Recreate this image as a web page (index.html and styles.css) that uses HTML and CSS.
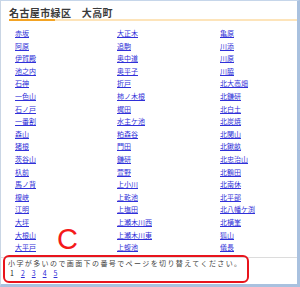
FILE: index.html
```html
<!DOCTYPE html>
<html lang="ja">
<head>
<meta charset="UTF-8" />
<meta name="viewport" content="width=device-width, initial-scale=1.0" />
<title>名古屋市緑区 大高町</title>
<link rel="stylesheet" href="styles.css">
</head>
<body>
  <div id="frame">
    <h1 class="title">名古屋市緑区　大高町</h1>
    <div class="rule"><span></span></div>

    <div class="aza-list">
      <ul class="col">
        <li><a href="#">赤坂</a></li>
        <li><a href="#">阿原</a></li>
        <li><a href="#">伊賀殿</a></li>
        <li><a href="#">池之内</a></li>
        <li><a href="#">石神</a></li>
        <li><a href="#">一色山</a></li>
        <li><a href="#">石ノ戸</a></li>
        <li><a href="#">一番割</a></li>
        <li><a href="#">森山</a></li>
        <li><a href="#">猪根</a></li>
        <li><a href="#">茨谷山</a></li>
        <li><a href="#">杁前</a></li>
        <li><a href="#">馬ノ背</a></li>
        <li><a href="#">榎峡</a></li>
        <li><a href="#">江明</a></li>
        <li><a href="#">大坪</a></li>
        <li><a href="#">大根山</a></li>
        <li><a href="#">大平戸</a></li>
      </ul>
      <ul class="col">
        <li><a href="#">大正木</a></li>
        <li><a href="#">追駒</a></li>
        <li><a href="#">奥中道</a></li>
        <li><a href="#">奥平子</a></li>
        <li><a href="#">折戸</a></li>
        <li><a href="#">柿ノ木根</a></li>
        <li><a href="#">梶田</a></li>
        <li><a href="#">水主ケ池</a></li>
        <li><a href="#">粕森谷</a></li>
        <li><a href="#">門田</a></li>
        <li><a href="#">鎌研</a></li>
        <li><a href="#">萱野</a></li>
        <li><a href="#">上小川</a></li>
        <li><a href="#">上乾池</a></li>
        <li><a href="#">上塩田</a></li>
        <li><a href="#">上瀬木川西</a></li>
        <li><a href="#">上瀬木川東</a></li>
        <li><a href="#">上蝮池</a></li>
      </ul>
      <ul class="col">
        <li><a href="#">亀原</a></li>
        <li><a href="#">川添</a></li>
        <li><a href="#">川原</a></li>
        <li><a href="#">川脇</a></li>
        <li><a href="#">北大高畑</a></li>
        <li><a href="#">北鎌研</a></li>
        <li><a href="#">北白土</a></li>
        <li><a href="#">北炭焼</a></li>
        <li><a href="#">北関山</a></li>
        <li><a href="#">北鍬畝</a></li>
        <li><a href="#">北忠治山</a></li>
        <li><a href="#">北鶴田</a></li>
        <li><a href="#">北南休</a></li>
        <li><a href="#">北平部</a></li>
        <li><a href="#">北八幡ケ渕</a></li>
        <li><a href="#">北横峯</a></li>
        <li><a href="#">狐山</a></li>
        <li><a href="#">儀長</a></li>
      </ul>
    </div>

    <div class="pager">
      <p class="note">小字が多いので画面下の番号でページを切り替えてください。</p>
      <div class="pages">
        <span class="current">1</span>
        <a href="#">2</a>
        <a href="#">3</a>
        <a href="#">4</a>
        <a href="#">5</a>
      </div>
    </div>

    <!-- annotation overlay -->
    <div class="mark-box"></div>
    <div class="mark-letter">C</div>
  </div>
</body>
</html>
```

FILE: styles.css
```css
html,body{margin:0;padding:0;background:#fff;}
body{font-family:"Noto Sans CJK JP","Noto Sans",sans-serif;}
#frame{position:relative;box-sizing:border-box;width:300px;height:287px;background:#fff;border-top:1px solid #c6d6ea;border-left:1px solid #c9d5e4;border-right:3px solid #a9c1df;border-bottom:3px solid #a9c1df;overflow:hidden;}

.title{margin:0;padding:5px 0 0 8px;font-size:10px;line-height:13px;font-weight:bold;color:#3a3a3a;letter-spacing:0.4px;}
.rule{margin:0 0 0 8px;height:2px;background:#fde4ba;}
.rule span{display:block;width:46px;height:2px;background:#f3a323;}

.aza-list{display:flex;padding:6px 0 0 14px;}
.col{list-style:none;margin:0;padding:0;}
.col:nth-child(1){width:102px;}
.col:nth-child(2){width:103px;}
.col li{font-size:7px;line-height:12.6px;height:12.6px;white-space:nowrap;}
.col a{color:#3030d8;text-decoration:underline;}

.pager{margin-top:3px;border-top:1px solid #dcdcdc;padding:1px 0 0 7px;}
.note{margin:0;font-size:7px;line-height:9px;color:#444;letter-spacing:1.4px;white-space:nowrap;}
.pages{display:flex;gap:7px;padding:1px 0 0 2px;font-size:7px;line-height:9px;}
.pages .current{color:#222;}
.pages a{color:#3030d8;text-decoration:underline;}

.mark-box{position:absolute;left:2px;top:254px;width:242px;height:24px;border:2px solid #e8141c;border-radius:6px;}
.mark-letter{position:absolute;left:56px;top:222px;font-family:"Liberation Sans",Arial,sans-serif;font-size:29px;line-height:32px;color:#f41a1a;}
```
